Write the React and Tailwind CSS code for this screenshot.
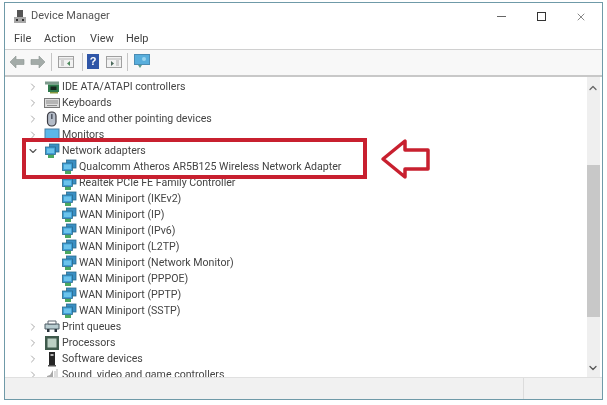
import { ChevronRight, ChevronDown, ChevronUp, X } from 'lucide-react';

const NetIcon = () => (
  <svg width="16" height="16" viewBox="0 0 16 16" className="shrink-0">
    <rect x="5.5" y="1" width="9.5" height="8" fill="#3a8fc4" stroke="#2a6a8c" strokeWidth="0.8" />
    <rect x="1.5" y="4" width="10" height="7.5" fill="#3f9ed6" stroke="#2a6a8c" strokeWidth="0.8" />
    <rect x="3" y="5.5" width="7" height="4.5" fill="#6cc4ec" />
    <rect x="4" y="12" width="6" height="3" fill="#4aa860" />
  </svg>
);

const IdeIcon = () => (
  <svg width="16" height="16" viewBox="0 0 16 16" className="shrink-0">
    <rect x="1" y="2.5" width="14" height="3" fill="#7d9a8c" />
    <rect x="4" y="5.5" width="11" height="7.5" fill="#2f7a4c" />
    <rect x="6.5" y="7.5" width="6" height="3.5" fill="#16261e" />
    <rect x="6" y="13" width="8" height="1.5" fill="#8a9a40" />
  </svg>
);

const KeyboardIcon = () => (
  <svg width="16" height="16" viewBox="0 0 16 16" className="shrink-0">
    <rect x="0.5" y="3.5" width="15" height="9" fill="#dcdcdc" stroke="#777" />
    <path d="M2 6h12M2 8h12M3 10.5h10" stroke="#8c8c8c" strokeWidth="1" />
  </svg>
);

const MouseIcon = () => (
  <svg width="16" height="16" viewBox="0 0 16 16" className="shrink-0">
    <rect x="3.5" y="1" width="8.5" height="14" rx="4" fill="#b4bcc8" stroke="#3c3c44" strokeWidth="1.2" />
    <rect x="7" y="3" width="1.6" height="5" fill="#555b68" />
  </svg>
);

const MonitorIcon = () => (
  <svg width="16" height="16" viewBox="0 0 16 16" className="shrink-0">
    <rect x="1" y="2" width="14" height="10" fill="#5cb8ea" stroke="#4b7fa3" />
    <rect x="5" y="12.5" width="6" height="2" fill="#888" />
  </svg>
);

const PrintIcon = () => (
  <svg width="16" height="16" viewBox="0 0 16 16" className="shrink-0">
    <path d="M1 5h14v5H1z" fill="#b8ccd0" stroke="#4c5c64" />
    <path d="M4 2h8v3H4z" fill="#fff" stroke="#5c6670" />
    <path d="M3 10h2.5v3H3zM10.5 10H13v3h-2.5z" fill="#29343c" />
  </svg>
);

const ProcessorIcon = () => (
  <svg width="16" height="16" viewBox="0 0 16 16" className="shrink-0">
    <rect x="1" y="1" width="14" height="14" fill="#3f5a4c" />
    <rect x="3.5" y="3.5" width="9" height="9" fill="#bcd0c4" />
  </svg>
);

const SoftwareIcon = () => (
  <svg width="16" height="16" viewBox="0 0 16 16" className="shrink-0">
    <rect x="5" y="1" width="6" height="13" fill="#262626" />
    <rect x="6.5" y="3" width="3" height="2" fill="#b8b8b8" />
    <rect x="4" y="14" width="8" height="1.5" fill="#555" />
  </svg>
);

const SoundIcon = () => (
  <svg width="16" height="16" viewBox="0 0 16 16" className="shrink-0">
    <path d="M3 9l3-1 3-5v12H3z" fill="#a8a8a8" />
    <path d="M11 4v10M13 2v12" stroke="#c4c4c4" strokeWidth="1.2" />
  </svg>
);

const top = [
  { name: 'IDE ATA/ATAPI controllers', icon: <IdeIcon /> },
  { name: 'Keyboards', icon: <KeyboardIcon /> },
  { name: 'Mice and other pointing devices', icon: <MouseIcon /> },
  { name: 'Monitors', icon: <MonitorIcon /> },
];

const adapters = [
  'Qualcomm Atheros AR5B125 Wireless Network Adapter',
  'Realtek PCIe FE Family Controller',
  'WAN Miniport (IKEv2)',
  'WAN Miniport (IP)',
  'WAN Miniport (IPv6)',
  'WAN Miniport (L2TP)',
  'WAN Miniport (Network Monitor)',
  'WAN Miniport (PPPOE)',
  'WAN Miniport (PPTP)',
  'WAN Miniport (SSTP)',
];

const bottom = [
  { name: 'Print queues', icon: <PrintIcon /> },
  { name: 'Processors', icon: <ProcessorIcon /> },
  { name: 'Software devices', icon: <SoftwareIcon /> },
  { name: 'Sound, video and game controllers', icon: <SoundIcon /> },
];

function Row({ icon, name, open }) {
  return (
    <div className="flex h-4 items-center">
      <span className="flex w-[12px] shrink-0 justify-center">
        {open ? (
          <ChevronDown size={12} strokeWidth={2.2} className="text-[#555]" />
        ) : (
          <ChevronRight size={12} strokeWidth={2} className="text-[#aaa]" />
        )}
      </span>
      <span className="ml-[5px] mr-[2px] flex">{icon}</span>
      <span className="whitespace-nowrap">{name}</span>
    </div>
  );
}

function ToolIcons() {
  return (
    <div className="flex h-[27px] items-center border-b-2 border-[#c8c8c8] bg-[#f8f8f8] pb-[2px] pl-[4px]">
      <svg width="16" height="14" viewBox="0 0 16 14" className="mr-[5px]">
        <path d="M1 7l6-6v3.5h8v5H7V13z" fill="#a3aba8" stroke="#8b9390" strokeWidth="0.6" />
      </svg>
      <svg width="16" height="14" viewBox="0 0 16 14">
        <path d="M15 7L9 1v3.5H1v5h8V13z" fill="#a3aba8" stroke="#8b9390" strokeWidth="0.6" />
      </svg>
      <div className="mx-[5px] h-[18px] w-px bg-[#c4c4c4]" />
      <svg width="16" height="14" viewBox="0 0 16 14" className="ml-[1px]">
        <rect x="0.5" y="1.5" width="15" height="11" fill="#f2f2f2" stroke="#a0a0a0" />
        <path d="M1 4h14" stroke="#b8b8b8" />
        <path d="M3 6h3M3 8h3M3 10h3" stroke="#aaa" />
        <path d="M12 6v5l-3-2.5z" fill="#4c8a5c" />
      </svg>
      <div className="ml-[8px] mr-[4px] h-[18px] w-px bg-[#c4c4c4]" />
      <div className="flex h-[15px] w-[12px] items-center justify-center bg-[#2f56a8] font-['Liberation_Sans',sans-serif] text-[11px] font-bold text-white">
        ?
      </div>
      <svg width="16" height="14" viewBox="0 0 16 14" className="ml-[7px]">
        <rect x="0.5" y="1.5" width="15" height="11" fill="#f2f2f2" stroke="#a0a0a0" />
        <path d="M1 4h14" stroke="#b8b8b8" />
        <path d="M10 6h3M10 8h3M10 10h3" stroke="#aaa" />
        <path d="M5 6v5l3-2.5z" fill="#4c6a5c" />
      </svg>
      <div className="mx-[5px] h-[18px] w-px bg-[#c4c4c4]" />
      <svg width="16" height="15" viewBox="0 0 16 15" className="ml-[1px]">
        <rect x="0.5" y="0.5" width="15" height="10" fill="#58aedc" stroke="#4a8cb4" />
        <path d="M4 11h4l-2 3z" fill="#5c9c8c" />
        <circle cx="10" cy="5" r="2" fill="#9ad4ee" />
      </svg>
    </div>
  );
}

export default function App() {
  return (
    <div className="h-[405px] w-[607px] overflow-hidden bg-white pl-1 pr-1 pt-0.5 font-['Roboto',sans-serif] text-[10.6px] text-[#444] blur-[0.4px]">
      <div className="relative flex h-[398px] w-[599px] flex-col border border-[#6f9aa8]">
        {/* title bar */}
        <div className="flex h-[25px] items-center pl-2 pt-[2px] text-[11px] text-[#555]">
          <svg width="14" height="16" viewBox="0 0 14 16" className="mr-[4px]">
            <rect x="4" y="1" width="6" height="7" fill="#555" />
            <rect x="1" y="8" width="12" height="6" fill="#a8a8a8" />
            <rect x="3" y="10" width="2" height="2" fill="#333" />
            <rect x="9" y="10" width="2" height="2" fill="#333" />
          </svg>
          Device Manager
          <div className="ml-auto flex items-center pr-[15px] text-[#444]">
            <div className="h-px w-[9px] bg-[#666]" />
            <div className="ml-[31px] h-[9px] w-[9px] border border-[#333]" />
            <X size={12} strokeWidth={1.4} className="ml-[29px] text-[#555]" />
          </div>
        </div>
        {/* menu */}
        <div className="flex h-[22px] items-center border-b border-[#d0d0d0] pl-[9px] pt-[2px] text-[11px] text-[#444]">
          <span className="w-[30px]">File</span>
          <span className="w-[46px]">Action</span>
          <span className="w-[36px]">View</span>
          <span>Help</span>
        </div>
        <ToolIcons />
        {/* tree and scrollbar */}
        <div className="flex min-h-0 flex-1">
          <div className="min-w-0 flex-1 overflow-hidden pl-[22px] pt-[2px]">
            {top.map((t) => (
              <Row key={t.name} icon={t.icon} name={t.name} />
            ))}
            <Row open icon={<NetIcon />} name="Network adapters" />
            <div className="pl-[34px]">
              {adapters.map((a) => (
                <div key={a} className="flex h-4 items-center">
                  <span className="mr-[2px] flex">
                    <NetIcon />
                  </span>
                  <span className="whitespace-nowrap">{a}</span>
                </div>
              ))}
            </div>
            {bottom.map((t) => (
              <Row key={t.name} icon={t.icon} name={t.name} />
            ))}
          </div>
          <div className="mr-[2px] flex w-[13px] shrink-0 flex-col bg-[#efefef]">
            <ChevronUp size={12} strokeWidth={2.5} className="mt-[5px] text-[#666]" />
            <div className="mt-[71px] h-[152px] bg-[#c8c8c8]" />
            <ChevronDown size={12} strokeWidth={2.5} className="mt-auto mb-[3px] text-[#555]" />
          </div>
        </div>
        {/* status bar */}
        <div className="flex h-[22px] border-t border-[#e0e0e0] bg-[#f1f1f1]">
          <div className="w-[519px] border-r border-[#dcdcdc]" />
        </div>
      </div>

      {/* red highlight over the tree */}
      <div className="absolute left-[22px] top-[138px] h-[41px] w-[345px] border-4 border-[#c8202f]" />
      <svg width="52" height="44" viewBox="0 0 52 44" className="absolute left-[380px] top-[138px]">
        <path d="M3 21 L25 3 V12 H48 V31 H25 V39 Z" fill="none" stroke="#c8202f" strokeWidth="3.5" strokeLinejoin="round" />
      </svg>
    </div>
  );
}
